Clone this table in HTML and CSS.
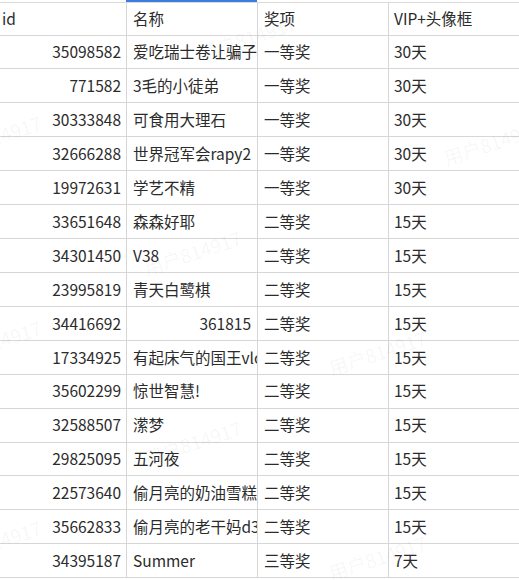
FILE: index.html
```html
<!DOCTYPE html>
<html lang="zh">
<head>
<meta charset="utf-8">
<link rel="stylesheet" href="styles.css">
</head>
<body>
<div class="sheet">
  <div class="row head">
    <div class="cell c1">id</div>
    <div class="cell c2 active">名称</div>
    <div class="cell c3">奖项</div>
    <div class="cell c4">VIP+头像框</div>
  </div>
  <div class="row"><div class="cell c1 num">35098582</div><div class="cell c2">爱吃瑞士卷让骗子</div><div class="cell c3">一等奖</div><div class="cell c4">30天</div></div>
  <div class="row"><div class="cell c1 num">771582</div><div class="cell c2">3毛的小徒弟</div><div class="cell c3">一等奖</div><div class="cell c4">30天</div></div>
  <div class="row"><div class="cell c1 num">30333848</div><div class="cell c2">可食用大理石</div><div class="cell c3">一等奖</div><div class="cell c4">30天</div></div>
  <div class="row"><div class="cell c1 num">32666288</div><div class="cell c2">世界冠军会rapy2</div><div class="cell c3">一等奖</div><div class="cell c4">30天</div></div>
  <div class="row"><div class="cell c1 num">19972631</div><div class="cell c2">学艺不精</div><div class="cell c3">一等奖</div><div class="cell c4">30天</div></div>
  <div class="row"><div class="cell c1 num">33651648</div><div class="cell c2">森森好耶</div><div class="cell c3">二等奖</div><div class="cell c4">15天</div></div>
  <div class="row"><div class="cell c1 num">34301450</div><div class="cell c2">V38</div><div class="cell c3">二等奖</div><div class="cell c4">15天</div></div>
  <div class="row"><div class="cell c1 num">23995819</div><div class="cell c2">青天白鹭棋</div><div class="cell c3">二等奖</div><div class="cell c4">15天</div></div>
  <div class="row"><div class="cell c1 num">34416692</div><div class="cell c2 num">361815</div><div class="cell c3">二等奖</div><div class="cell c4">15天</div></div>
  <div class="row"><div class="cell c1 num">17334925</div><div class="cell c2">有起床气的国王vlog</div><div class="cell c3">二等奖</div><div class="cell c4">15天</div></div>
  <div class="row"><div class="cell c1 num">35602299</div><div class="cell c2">惊世智慧!</div><div class="cell c3">二等奖</div><div class="cell c4">15天</div></div>
  <div class="row"><div class="cell c1 num">32588507</div><div class="cell c2">潆梦</div><div class="cell c3">二等奖</div><div class="cell c4">15天</div></div>
  <div class="row"><div class="cell c1 num">29825095</div><div class="cell c2">五河夜</div><div class="cell c3">二等奖</div><div class="cell c4">15天</div></div>
  <div class="row"><div class="cell c1 num">22573640</div><div class="cell c2">偷月亮的奶油雪糕</div><div class="cell c3">二等奖</div><div class="cell c4">15天</div></div>
  <div class="row"><div class="cell c1 num">35662833</div><div class="cell c2">偷月亮的老干妈d3</div><div class="cell c3">二等奖</div><div class="cell c4">15天</div></div>
  <div class="row"><div class="cell c1 num">34395187</div><div class="cell c2">Summer</div><div class="cell c3">三等奖</div><div class="cell c4">7天</div></div>

  <div class="wm" style="left:195px;top:40px">用户814917</div>
  <div class="wm" style="left:-60px;top:140px">用户814917</div>
  <div class="wm" style="left:440px;top:145px">用户814917</div>
  <div class="wm" style="left:140px;top:255px">用户814917</div>
  <div class="wm" style="left:-60px;top:345px">用户814917</div>
  <div class="wm" style="left:325px;top:355px">用户814917</div>
  <div class="wm" style="left:140px;top:445px">用户814917</div>
  <div class="wm" style="left:-60px;top:545px">用户814917</div>
  <div class="wm" style="left:325px;top:560px">用户814917</div>
</div>
</body>
</html>
```
FILE: styles.css
```css
html, body {
  margin: 0;
  padding: 0;
  background: #ffffff;
}
.sheet {
  position: relative;
  width: 519px;
  height: 580px;
  overflow: hidden;
  padding-top: 2px;
  box-sizing: border-box;
  font-family: "Noto Sans CJK SC", "Noto Sans", sans-serif;
  font-size: 15.5px;
  color: #2b2b2b;
}
.row {
  display: grid;
  grid-template-columns: 127px 131px 131px 1fr;
  height: 33.93px;
}
.row.head {
  height: 32.5px;
  border-top: 1px solid #dadada;
}
.cell {
  box-sizing: border-box;
  border-right: 1px solid #d6d6d6;
  border-bottom: 1px solid #d6d6d6;
  display: flex;
  align-items: center;
  padding: 0 6px;
  white-space: nowrap;
  overflow: hidden;
  line-height: 1;
}
.cell.c1 {
  padding-left: 2px;
  padding-right: 5px;
}
.cell.c4 {
  border-right: none;
  padding-left: 5px;
}
.cell.num {
  justify-content: flex-end;
}
.cell.c2.num {
  padding-right: 6px;
}
.cell.active {
  position: relative;
  overflow: visible;
}
.cell.active::before {
  content: "";
  position: absolute;
  left: -1px;
  right: 0;
  top: -3px;
  height: 2px;
  background: #3b7ddf;
}
.wm {
  position: absolute;
  font-family: "Noto Sans CJK SC", "Noto Sans", sans-serif;
  font-size: 19px;
  color: rgba(0, 0, 0, 0.045);
  transform: rotate(-18deg);
  transform-origin: left top;
  white-space: nowrap;
  pointer-events: none;
}
```
